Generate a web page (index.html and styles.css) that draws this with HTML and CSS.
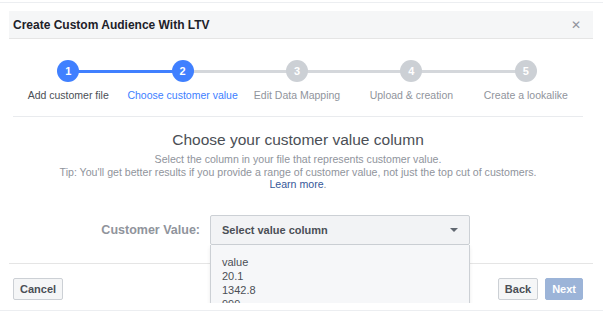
FILE: index.html
```html
<html><head>
  <meta charset="UTF-8">
  <meta name="viewport" content="width=device-width, initial-scale=1.0">
  <title>Create Custom Audience With LTV</title>
  <link rel="stylesheet" href="styles.css">
</head>
<body>
  <div class="frame">
    <div class="dialog">
      <div class="dialog-header">
        <h2>Create Custom Audience With LTV</h2>
        <span class="close">&#x2715;</span>
      </div>

      <div class="stepper">
        <div class="step done">
          <span class="dot">1</span>
          <span class="step-label">Add customer file</span>
        </div>
        <div class="step active">
          <span class="dot">2</span>
          <span class="step-label">Choose customer value</span>
        </div>
        <div class="step">
          <span class="dot">3</span>
          <span class="step-label">Edit Data Mapping</span>
        </div>
        <div class="step">
          <span class="dot">4</span>
          <span class="step-label">Upload &amp; creation</span>
        </div>
        <div class="step">
          <span class="dot">5</span>
          <span class="step-label">Create a lookalike</span>
        </div>
      </div>

      <div class="dialog-body">
        <h1>Choose your customer value column</h1>
        <p class="tip">
          Select the column in your file that represents customer value.<br>
          Tip: You'll get better results if you provide a range of customer value, not just the top cut of customers.<br>
          <a href="#">Learn more</a>.
        </p>

        <div class="value-row">
          <label>Customer Value:</label>
          <div class="select-wrap">
            <div class="select">
              <span>Select value column</span>
              <span class="caret"></span>
            </div>
            <ul class="menu">
              <li>value</li>
              <li>20.1</li>
              <li>1342.8</li>
              <li>999</li>
            </ul>
          </div>
        </div>
      </div>

      <div class="dialog-footer">
        <button class="btn">Cancel</button>
        <div class="right-btns">
          <button class="btn">Back</button>
          <button class="btn primary" disabled>Next</button>
        </div>
      </div>
    </div>
  </div>
</body>
</html>
```

FILE: styles.css
```css
:root {
  --blue: #4080ff;
  --gray-line: #ccd0d5;
  --text-dark: #1d2129;
  --text-mid: #4b4f56;
  --text-light: #90949c;
  --panel: #f5f6f7;
}

body {
  margin: 0;
  font-family: 'Liberation Sans', Arial, sans-serif;
  background: #fff;
  color: var(--text-mid);
}

.frame {
  margin-top: 2px;
  height: 309px;
  border-top: 1px solid #eceef1;
  border-bottom: 1px solid #eceef1;
  box-sizing: border-box;
  padding-top: 8px;
}

.dialog {
  margin: 0 10px 0 9px;
  height: 292px;
  overflow: hidden;
  background: #fff;
  display: flex;
  flex-direction: column;
}

.dialog-header {
  height: 27px;
  background: var(--panel);
  border-bottom: 1px solid #e5e5e5;
  display: flex;
  align-items: center;
  justify-content: space-between;
  padding: 0 12px 0 4px;
  flex-shrink: 0;
}

.dialog-header h2 {
  margin: 0;
  font-size: 12px;
  font-weight: bold;
  color: var(--text-dark);
}

.close {
  font-size: 12px;
  color: var(--text-light);
}

/* stepper */
.stepper {
  display: grid;
  grid-template-columns: repeat(5, 1fr);
  padding: 21px 10px 0 2px;
  height: 56px;
  flex-shrink: 0;
}

.step {
  position: relative;
  display: flex;
  flex-direction: column;
  align-items: center;
}

.step + .step::before {
  content: "";
  position: absolute;
  top: 10px;
  left: -50%;
  width: 100%;
  height: 3px;
  background: #d4d7db;
}

.step.active::before {
  background: var(--blue);
}

.dot {
  position: relative;
  z-index: 1;
  width: 22px;
  height: 22px;
  border-radius: 50%;
  background: #ccd0d5;
  color: #fff;
  font-size: 11px;
  font-weight: bold;
  display: flex;
  align-items: center;
  justify-content: center;
}

.done .dot,
.active .dot {
  background: var(--blue);
}

.step-label {
  margin-top: 7px;
  font-size: 10.5px;
  color: var(--text-light);
  white-space: nowrap;
}

.done .step-label {
  color: var(--text-mid);
}

.active .step-label {
  color: var(--blue);
}

/* body */
.dialog-body {
  margin: 0 10px 0 4px;
  border-top: 1px solid #e9ebee;
  text-align: center;
  height: 146px;
  flex-shrink: 0;
}

.dialog-body h1 {
  margin: 14px 0 0;
  font-size: 15.5px;
  font-weight: normal;
  color: var(--text-mid);
}

.tip {
  margin: 4px 0 0;
  font-size: 10.6px;
  line-height: 12.5px;
  color: var(--text-light);
}

.tip a {
  color: #365899;
  text-decoration: none;
}

.value-row {
  display: flex;
  align-items: center;
  margin-top: 24px;
  padding-left: 82px;
}

.value-row label {
  width: 105px;
  text-align: right;
  margin-right: 10px;
  font-size: 12.5px;
  font-weight: bold;
  color: var(--text-light);
}

.select-wrap {
  position: relative;
  width: 260px;
}

.select {
  height: 30px;
  box-sizing: border-box;
  border: 1px solid var(--gray-line);
  border-radius: 2px;
  background: #f2f3f5;
  display: flex;
  align-items: center;
  justify-content: space-between;
  padding: 0 11px 0 11px;
  font-size: 11px;
  font-weight: bold;
  color: var(--text-mid);
}

.caret {
  width: 0;
  height: 0;
  border-left: 4px solid transparent;
  border-right: 4px solid transparent;
  border-top: 4px solid #606770;
}

.menu {
  position: absolute;
  z-index: 5;
  top: 30px;
  left: 0;
  right: 0;
  margin: 0;
  padding: 10px 11px 10px;
  list-style: none;
  text-align: left;
  background: #f6f7f9;
  border: 1px solid var(--gray-line);
  border-top: none;
  box-shadow: 0 2px 4px rgba(0,0,0,0.08);
  font-size: 11px;
  line-height: 14px;
  color: var(--text-mid);
}

/* footer */
.dialog-footer {
  border-top: 1px solid #e5e5e5;
  display: flex;
  justify-content: space-between;
  align-items: center;
  padding: 10px 10px 0 4px;
  height: 40px;
  box-sizing: border-box;
}

.right-btns {
  display: flex;
  gap: 7px;
}

.btn {
  height: 22px;
  padding: 0 6px;
  border: 1px solid var(--gray-line);
  border-radius: 2px;
  background: var(--panel);
  font-family: inherit;
  font-size: 11px;
  font-weight: bold;
  color: var(--text-mid);
}

.btn.primary {
  background: #9cb4d8;
  border-color: #9cb4d8;
  color: #fff;
}
```
